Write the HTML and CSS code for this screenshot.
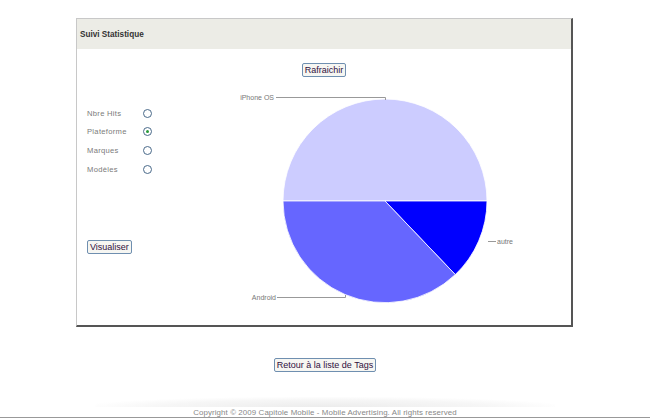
FILE: index.html
```html
<!DOCTYPE html>
<html lang="fr">
<head>
<meta charset="utf-8">
<title>Suivi Statistique</title>
<link rel="stylesheet" href="styles.css">
</head>
<body>
<div class="page">
  <div class="panel">
    <div class="panel-head">Suivi Statistique</div>
    <div class="panel-body">
      <div class="refresh-row"><button class="btn">Rafraichir</button></div>
      <div class="main-row">
        <div class="side">
          <ul class="options">
            <li><span class="opt-label">Nbre Hits</span><input class="radio" type="radio" name="t"></li>
            <li><span class="opt-label">Plateforme</span><input class="radio" type="radio" name="t" checked></li>
            <li><span class="opt-label">Marques</span><input class="radio" type="radio" name="t"></li>
            <li><span class="opt-label">Modèles</span><input class="radio" type="radio" name="t"></li>
          </ul>
          <button class="btn btn-vis">Visualiser</button>
        </div>
        <svg class="chart" width="300" height="222" viewBox="0 0 300 222">
          <path d="M53 113 A102 102 0 0 1 257 113 Z" fill="#ccccff" stroke="#fff" stroke-width="0.8"/>
          <path d="M155 113 L257 113 A102 102 0 0 1 225.3 186.6 Z" fill="#0000ff" stroke="#fff" stroke-width="0.8"/>
          <path d="M155 113 L225.3 186.6 A102 102 0 0 1 53 113 Z" fill="#6666ff" stroke="#fff" stroke-width="0.8"/>
          <polyline points="46,9.5 155.5,9.5 155.5,12" fill="none" stroke="#999" stroke-width="1"/>
          <polyline points="258,153.5 266,153.5" fill="none" stroke="#999" stroke-width="1"/>
          <polyline points="47,209.5 115.5,209.5 115.5,207" fill="none" stroke="#999" stroke-width="1"/>
          <text x="44" y="12" text-anchor="end" class="lbl">iPhone OS</text>
          <text x="267" y="156" class="lbl">autre</text>
          <text x="46" y="212" text-anchor="end" class="lbl">Android</text>
        </svg>
      </div>
    </div>
  </div>
  <div class="back-row"><button class="btn">Retour à la liste de Tags</button></div>
  <div class="footer">
    <div class="footer-shade"></div>
    <div class="footer-text">Copyright © 2009 Capitole Mobile - Mobile Advertising. All rights reserved</div>
  </div>
</div>
</body>
</html>
```
FILE: styles.css
```css
html, body {
  margin: 0;
  padding: 0;
  background: #fff;
}
.page {
  width: 650px;
  height: 418px;
  display: flex;
  flex-direction: column;
  align-items: center;
  font-family: "Liberation Sans", Arial, sans-serif;
}
.panel {
  margin-top: 18px;
  margin-right: 1px;
  width: 494px;
  height: 306px;
  border-top: 1px solid #c8c8c8;
  border-left: 1px solid #c8c8c8;
  border-right: 2px solid #555;
  border-bottom: 2px solid #555;
  display: flex;
  flex-direction: column;
}
.panel-head {
  height: 30px;
  background: #ececE6;
  display: flex;
  align-items: center;
  padding-left: 3px;
  font-family: "Liberation Sans", Arial, sans-serif;
  font-weight: bold;
  font-size: 8.2px;
  color: #333;
}
.panel-body {
  display: flex;
  flex-direction: column;
}
.refresh-row {
  display: flex;
  justify-content: center;
  padding-top: 14px;
}
.btn {
  font-family: "Liberation Sans", Arial, sans-serif;
  font-size: 9px;
  color: #301040;
  background: #f6f6f2;
  border: 1px solid #6f8fb0;
  border-radius: 2px;
  padding: 0 2px;
  height: 14px;
  line-height: 12px;
  margin: 0;
}
.main-row {
  display: flex;
  margin-top: 10px;
}
.side {
  width: 153px;
  padding-left: 10px;
  display: flex;
  flex-direction: column;
}
.options {
  list-style: none;
  margin: 21px 0 0 0;
  padding: 0;
  display: flex;
  flex-direction: column;
  gap: 8.7px;
}
.options li {
  display: flex;
  align-items: center;
  height: 10px;
}
.opt-label {
  width: 56px;
  font-size: 7.6px;
  color: #7a7a7a;
  letter-spacing: 0.3px;
}
.radio {
  appearance: none;
  -webkit-appearance: none;
  width: 9px;
  height: 9px;
  margin: 0;
  border: 1px solid #4a6a8a;
  border-radius: 50%;
  background: #fff;
  box-sizing: border-box;
  display: grid;
  place-items: center;
}
.radio:checked::after {
  content: "";
  width: 3px;
  height: 3px;
  border-radius: 50%;
  background: #2a9a3a;
}
.btn-vis {
  align-self: flex-start;
  margin-top: 66px;
}
.chart {
  display: block;
  margin-left: -10px;
  margin-top: 1px;
}
.lbl {
  font-family: "Liberation Sans", Arial, sans-serif;
  font-size: 7px;
  fill: #777;
}
.back-row {
  margin-top: 31px;
  display: flex;
  justify-content: center;
}
.footer {
  margin-top: auto;
  width: 650px;
  display: flex;
  flex-direction: column;
  align-items: center;
  border-bottom: 1px solid #999;
}
.footer-shade {
  width: 460px;
  height: 10px;
  background: radial-gradient(ellipse at 50% 100%, #ececec 0%, #f6f6f6 50%, #fff 75%);
}
.footer-text {
  font-size: 7.9px;
  color: #888;
  height: 10px;
  line-height: 12px;
  letter-spacing: 0.1px;
}
```
